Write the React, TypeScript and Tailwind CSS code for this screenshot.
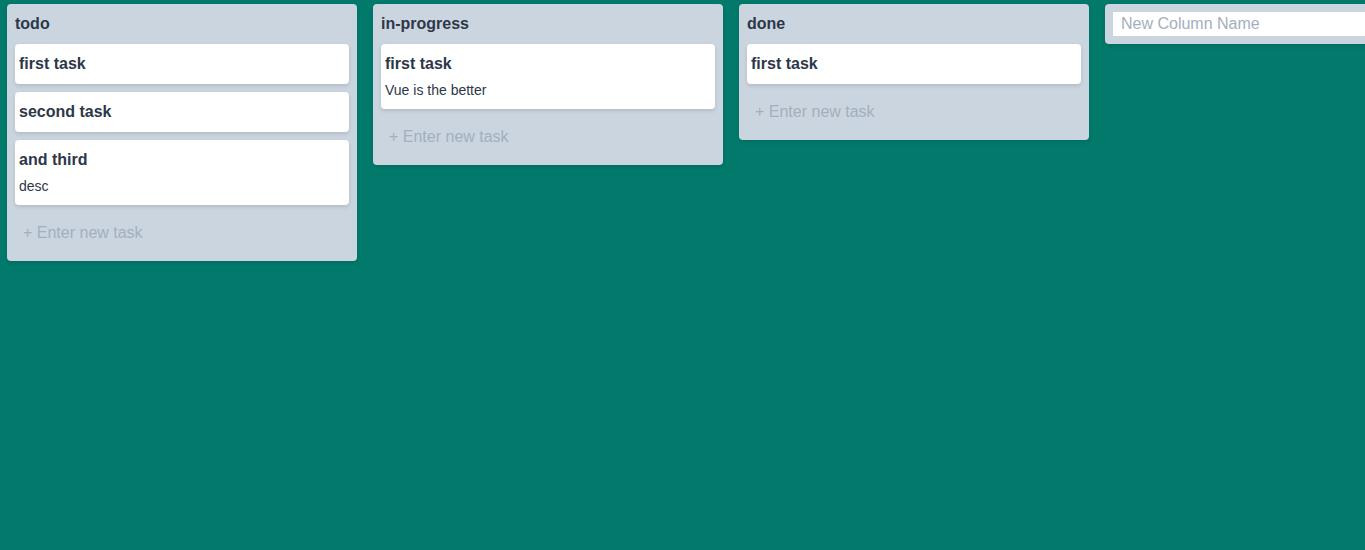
import React from "react";

type Task = { name: string; description?: string };
type Column = { name: string; tasks: Task[] };

const columns: Column[] = [
  {
    name: "todo",
    tasks: [
      { name: "first task" },
      { name: "second task" },
      { name: "and third", description: "desc" },
    ],
  },
  {
    name: "in-progress",
    tasks: [{ name: "first task", description: "Vue is the better" }],
  },
  {
    name: "done",
    tasks: [{ name: "first task" }],
  },
];

export default function App() {
  return (
    <div
      className="w-[1365px] h-[550px] overflow-hidden bg-[#01796b] text-[#2d3748]"
      style={{ fontFamily: '"Liberation Sans", Arial, sans-serif' }}
    >
      <div className="flex flex-row items-start pl-[7px] pt-[4px] gap-4">
        {columns.map((col) => (
          <div
            key={col.name}
            className="w-[350px] shrink-0 bg-[#cbd5e0] p-2 rounded shadow-[0_2px_4px_0_rgba(0,0,0,0.1)]"
          >
            <div className="flex items-center mb-2 font-bold text-[16px] leading-6">
              {col.name}
            </div>
            <div className="flex flex-col">
              {col.tasks.map((t, i) => (
                <div
                  key={i}
                  className="flex flex-col mb-2 py-2 px-1 rounded bg-white shadow-[0_2px_4px_0_rgba(0,0,0,0.12)]"
                >
                  <span className="font-bold text-[16px] leading-6">{t.name}</span>
                  {t.description && (
                    <p className="mt-1 text-[14px] leading-[21px]">{t.description}</p>
                  )}
                </div>
              ))}
              <input
                type="text"
                placeholder="+ Enter new task"
                className="block w-full h-10 p-2 bg-transparent text-[16px] leading-6 outline-none placeholder:text-[#a3afbe]"
              />
            </div>
          </div>
        ))}
        <div className="w-[350px] shrink-0 bg-[#cbd5e0] p-2 rounded shadow-[0_2px_4px_0_rgba(0,0,0,0.1)]">
          <input
            type="text"
            placeholder="New Column Name"
            className="block w-full h-6 px-2 bg-white text-[16px] leading-6 outline-none placeholder:text-[#a3afbe]"
          />
        </div>
      </div>
    </div>
  );
}
